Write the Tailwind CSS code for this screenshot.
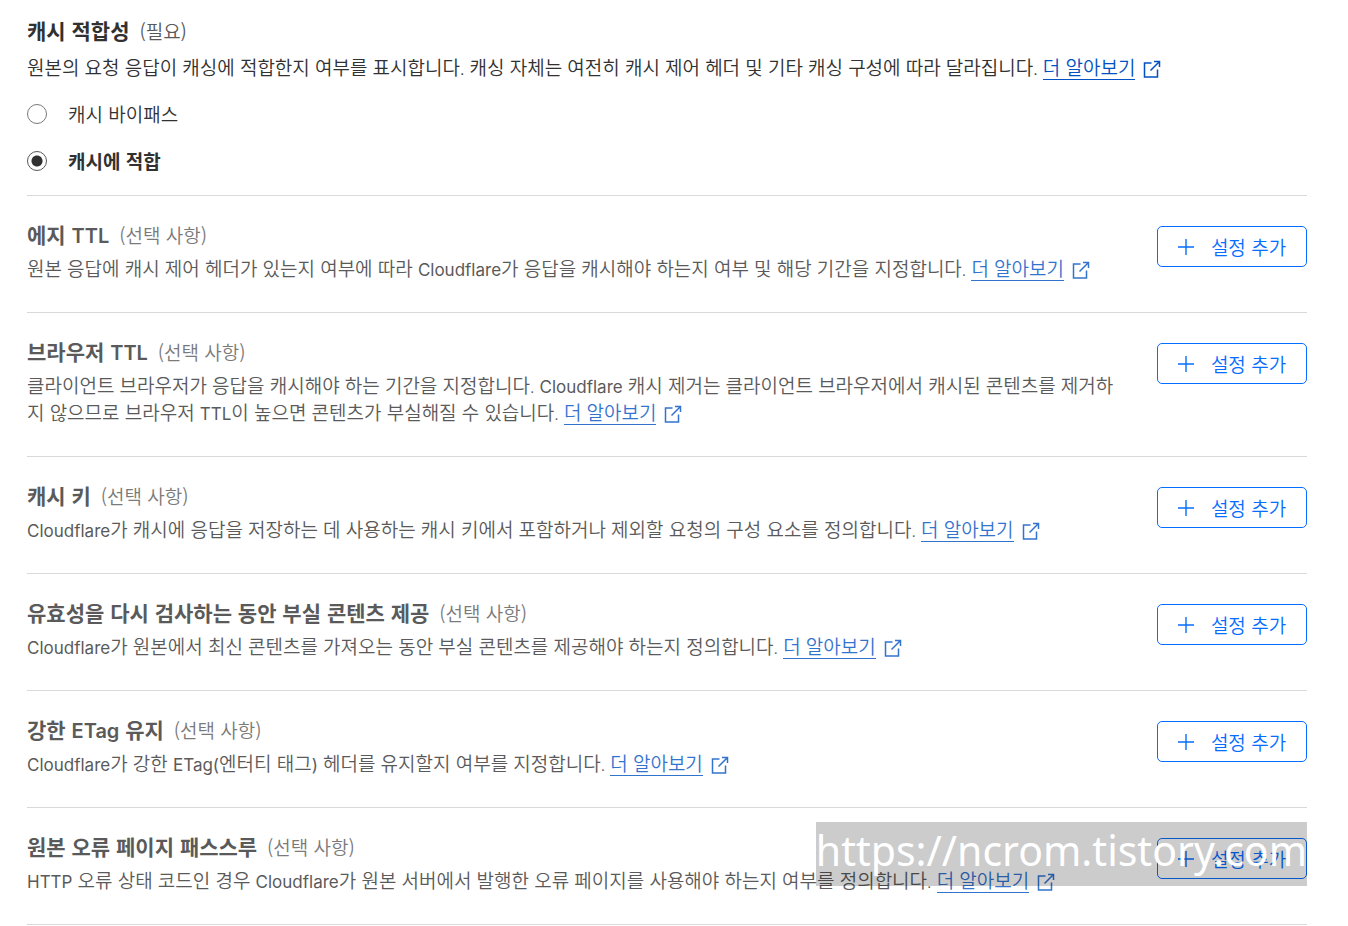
<!DOCTYPE html>
<html lang="ko">
<head>
    <meta charset="UTF-8">
    <meta name="viewport" content="width=device-width, initial-scale=1.0">
    <title>캐시 규칙</title>
    <script src="https://cdn.jsdelivr.net/npm/@tailwindcss/browser@4"></script>
</head>
<body class="bg-white font-['Noto_Sans_CJK_KR',sans-serif] text-[19px] leading-[27px] text-[#313131]">
    <svg class="hidden">
        <symbol id="external" viewBox="0 0 18 18">
            <path d="M8.5 3H1.5V17H14.5V9.5M11 1.5H16.5V7M16.5 1.5L7.5 10.5" fill="none" stroke="currentColor" stroke-width="1.5" />
        </symbol>
        <symbol id="plus" viewBox="0 0 16 16">
            <path d="M8 0V16M0 8H16" fill="none" stroke="currentColor" stroke-width="1.4" />
        </symbol>
    </svg>

    <main class="pl-[27px] pr-[41px]">
        <!-- Cache eligibility -->
        <section class="border-b border-[#d9d9d9] pt-4 pb-[21px]">
            <h2 class="text-[21px] leading-7 font-semibold">캐시 적합성 <span class="ml-1 text-[19px] leading-none font-[350] text-[#595959]">(필요)</span></h2>
            <p class="mt-[10px] font-['Lato','Noto_Sans_CJK_KR',sans-serif] font-[350]">원본의 요청 응답이 캐싱에 적합한지 여부를 표시합니다. 캐싱 자체는 여전히 캐시 제어 헤더 및 기타 캐싱 구성에 따라 달라집니다. <a href="#" class="text-[#0051c3]"><span class="border-b border-current">더 알아보기</span><svg class="ml-2 inline size-[18px] align-[-3px]"><use href="#external" /></svg></a></p>
            <div class="mt-[19px] space-y-5">
                <label class="flex items-center gap-[21px] font-[350]">
                    <input type="radio" name="eligibility" class="size-5 appearance-none rounded-full border border-[#797979] bg-white checked:border-[#595959] checked:bg-[radial-gradient(circle,#313131_5px,transparent_6px)]">
                    캐시 바이패스
                </label>
                <label class="flex items-center gap-[21px] font-semibold">
                    <input type="radio" name="eligibility" checked class="size-5 appearance-none rounded-full border border-[#797979] bg-white checked:border-[#595959] checked:bg-[radial-gradient(circle,#313131_5px,transparent_6px)]">
                    캐시에 적합
                </label>
            </div>
        </section>

        <!-- Optional settings -->
        <section class="flex items-start justify-between border-b border-[#d9d9d9] pt-6 pb-[30px]">
            <div class="max-w-[1092px] opacity-80">
                <h2 class="text-[21px] leading-7 font-semibold">에지 <span class="font-['Inter'] text-[20px] leading-none">TTL</span> <span class="ml-1 text-[19px] leading-none font-[350] text-[#595959]">(선택 사항)</span></h2>
                <p class="mt-[7px] font-['Lato','Noto_Sans_CJK_KR',sans-serif] font-[350]">원본 응답에 캐시 제어 헤더가 있는지 여부에 따라 <span class="font-['Inter'] text-[17px] leading-none font-normal">Cloudflare</span>가 응답을 캐시해야 하는지 여부 및 해당 기간을 지정합니다. <a href="#" class="text-[#0051c3]"><span class="border-b border-current">더 알아보기</span><svg class="ml-2 inline size-[18px] align-[-3px]"><use href="#external" /></svg></a></p>
            </div>
            <button class="mt-1.5 flex h-[41px] w-[150px] shrink-0 items-center justify-center gap-[17px] rounded-[5px] border border-[#056dff] font-[350] text-[#056dff]"><svg class="size-4"><use href="#plus" /></svg>설정 추가</button>
        </section>

        <section class="flex items-start justify-between border-b border-[#d9d9d9] pt-6 pb-[30px]">
            <div class="max-w-[1092px] opacity-80">
                <h2 class="text-[21px] leading-7 font-semibold">브라우저 <span class="font-['Inter'] text-[20px] leading-none">TTL</span> <span class="ml-1 text-[19px] leading-none font-[350] text-[#595959]">(선택 사항)</span></h2>
                <p class="mt-[7px] font-['Lato','Noto_Sans_CJK_KR',sans-serif] font-[350]">클라이언트 브라우저가 응답을 캐시해야 하는 기간을 지정합니다. <span class="font-['Inter'] text-[17px] leading-none font-normal">Cloudflare</span> 캐시 제거는 클라이언트 브라우저에서 캐시된 콘텐츠를 제거하지 않으므로 브라우저 <span class="font-['Inter'] text-[17px] leading-none font-normal">TTL</span>이 높으면 콘텐츠가 부실해질 수 있습니다. <a href="#" class="text-[#0051c3]"><span class="border-b border-current">더 알아보기</span><svg class="ml-2 inline size-[18px] align-[-3px]"><use href="#external" /></svg></a></p>
            </div>
            <button class="mt-1.5 flex h-[41px] w-[150px] shrink-0 items-center justify-center gap-[17px] rounded-[5px] border border-[#056dff] font-[350] text-[#056dff]"><svg class="size-4"><use href="#plus" /></svg>설정 추가</button>
        </section>

        <section class="flex items-start justify-between border-b border-[#d9d9d9] pt-6 pb-[30px]">
            <div class="max-w-[1092px] opacity-80">
                <h2 class="text-[21px] leading-7 font-semibold">캐시 키 <span class="ml-1 text-[19px] leading-none font-[350] text-[#595959]">(선택 사항)</span></h2>
                <p class="mt-[7px] font-['Lato','Noto_Sans_CJK_KR',sans-serif] font-[350]"><span class="font-['Inter'] text-[17px] leading-none font-normal">Cloudflare</span>가 캐시에 응답을 저장하는 데 사용하는 캐시 키에서 포함하거나 제외할 요청의 구성 요소를 정의합니다. <a href="#" class="text-[#0051c3]"><span class="border-b border-current">더 알아보기</span><svg class="ml-2 inline size-[18px] align-[-3px]"><use href="#external" /></svg></a></p>
            </div>
            <button class="mt-1.5 flex h-[41px] w-[150px] shrink-0 items-center justify-center gap-[17px] rounded-[5px] border border-[#056dff] font-[350] text-[#056dff]"><svg class="size-4"><use href="#plus" /></svg>설정 추가</button>
        </section>

        <section class="flex items-start justify-between border-b border-[#d9d9d9] pt-6 pb-[30px]">
            <div class="max-w-[1092px] opacity-80">
                <h2 class="text-[21px] leading-7 font-semibold">유효성을 다시 검사하는 동안 부실 콘텐츠 제공 <span class="ml-1 text-[19px] leading-none font-[350] text-[#595959]">(선택 사항)</span></h2>
                <p class="mt-[7px] font-['Lato','Noto_Sans_CJK_KR',sans-serif] font-[350]"><span class="font-['Inter'] text-[17px] leading-none font-normal">Cloudflare</span>가 원본에서 최신 콘텐츠를 가져오는 동안 부실 콘텐츠를 제공해야 하는지 정의합니다. <a href="#" class="text-[#0051c3]"><span class="border-b border-current">더 알아보기</span><svg class="ml-2 inline size-[18px] align-[-3px]"><use href="#external" /></svg></a></p>
            </div>
            <button class="mt-1.5 flex h-[41px] w-[150px] shrink-0 items-center justify-center gap-[17px] rounded-[5px] border border-[#056dff] font-[350] text-[#056dff]"><svg class="size-4"><use href="#plus" /></svg>설정 추가</button>
        </section>

        <section class="flex items-start justify-between border-b border-[#d9d9d9] pt-6 pb-[30px]">
            <div class="max-w-[1092px] opacity-80">
                <h2 class="text-[21px] leading-7 font-semibold">강한 <span class="font-['Inter'] text-[20px] leading-none">ETag</span> 유지 <span class="ml-1 text-[19px] leading-none font-[350] text-[#595959]">(선택 사항)</span></h2>
                <p class="mt-[7px] font-['Lato','Noto_Sans_CJK_KR',sans-serif] font-[350]"><span class="font-['Inter'] text-[17px] leading-none font-normal">Cloudflare</span>가 강한 <span class="font-['Inter'] text-[17px] leading-none font-normal">ETag(</span>엔터티 태그<span class="font-['Inter'] text-[17px] leading-none font-normal">)</span> 헤더를 유지할지 여부를 지정합니다. <a href="#" class="text-[#0051c3]"><span class="border-b border-current">더 알아보기</span><svg class="ml-2 inline size-[18px] align-[-3px]"><use href="#external" /></svg></a></p>
            </div>
            <button class="mt-1.5 flex h-[41px] w-[150px] shrink-0 items-center justify-center gap-[17px] rounded-[5px] border border-[#056dff] font-[350] text-[#056dff]"><svg class="size-4"><use href="#plus" /></svg>설정 추가</button>
        </section>

        <section class="relative flex items-start justify-between border-b border-[#d9d9d9] pt-6 pb-[30px]">
            <div class="max-w-[1092px] opacity-80">
                <h2 class="text-[21px] leading-7 font-semibold">원본 오류 페이지 패스스루 <span class="ml-1 text-[19px] leading-none font-[350] text-[#595959]">(선택 사항)</span></h2>
                <p class="mt-[7px] font-['Lato','Noto_Sans_CJK_KR',sans-serif] font-[350]"><span class="font-['Inter'] text-[17px] leading-none font-normal">HTTP</span> 오류 상태 코드인 경우 <span class="font-['Inter'] text-[17px] leading-none font-normal">Cloudflare</span>가 원본 서버에서 발행한 오류 페이지를 사용해야 하는지 여부를 정의합니다. <a href="#" class="text-[#0051c3]"><span class="border-b border-current">더 알아보기</span><svg class="ml-2 inline size-[18px] align-[-3px]"><use href="#external" /></svg></a></p>
            </div>
            <button class="mt-1.5 flex h-[41px] w-[150px] shrink-0 items-center justify-center gap-[17px] rounded-[5px] border border-[#056dff] font-[350] text-[#056dff]"><svg class="size-4"><use href="#plus" /></svg>설정 추가</button>
            <div class="pointer-events-none absolute top-[14px] right-0 bg-black/20 pb-2 font-['Noto_Sans',sans-serif] text-[41px] leading-[56px] text-white">https://ncrom.tistory.com</div>
        </section>
    </main>
</body>
</html>
